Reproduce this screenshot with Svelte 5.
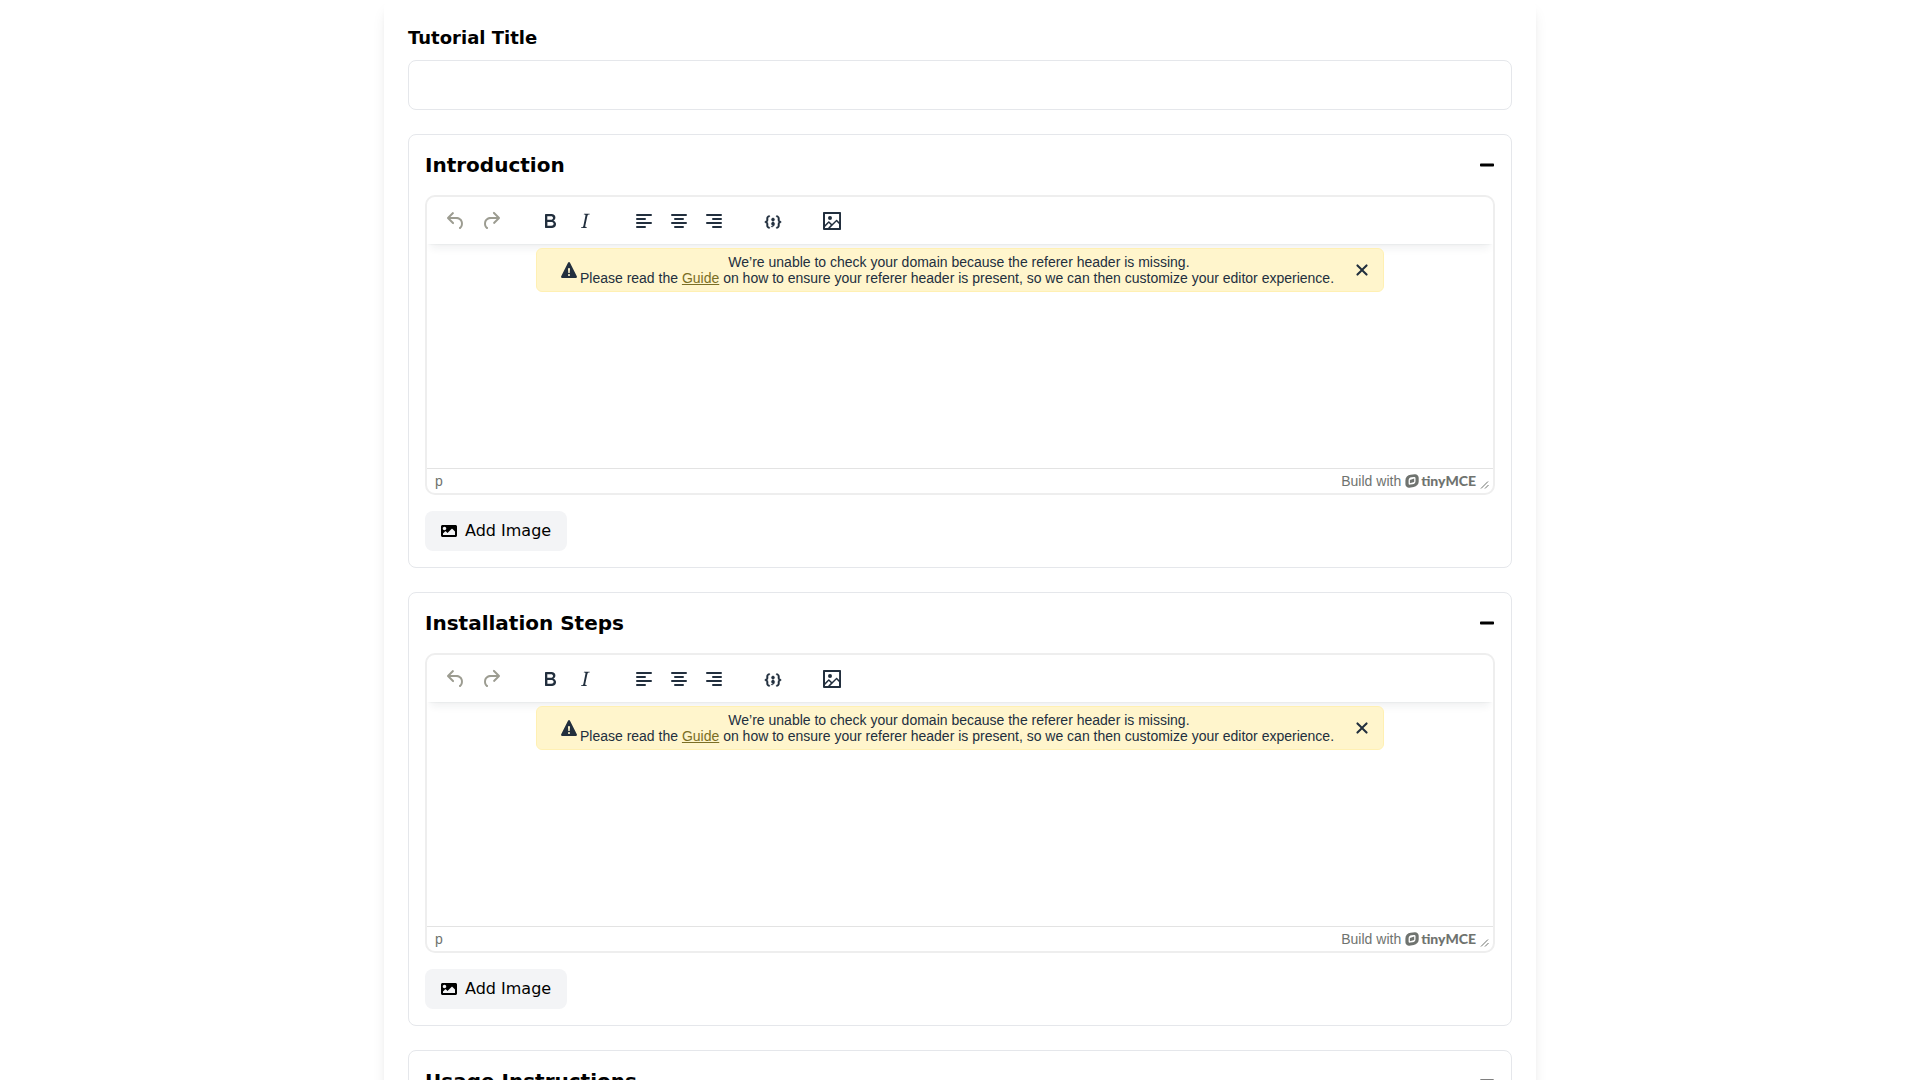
<script>
  let title = $state('');
  let sections = $state([
    { id: 'introduction', name: 'Introduction', open: true, notice: true },
    { id: 'installation', name: 'Installation Steps', open: true, notice: true },
    { id: 'usage', name: 'Usage Instructions', open: true, notice: true }
  ]);

  const groups = [
    [
      {
        label: 'Undo',
        disabled: true,
        d: 'M6.4 8H12c3.7 0 6.2 2 6.8 5.1.6 2.7-.4 5.6-2.3 6.8a1 1 0 0 1-1-1.8c1.1-.6 1.8-2.7 1.4-4.6-.5-2.1-2.1-3.5-4.9-3.5H6.4l3.3 3.3a1 1 0 1 1-1.4 1.4l-5-5a1 1 0 0 1 0-1.4l5-5a1 1 0 0 1 1.4 1.4L6.4 8Z'
      },
      {
        label: 'Redo',
        disabled: true,
        d: 'M17.6 10H12c-2.8 0-4.4 1.4-4.9 3.5-.4 2 .3 4 1.4 4.6a1 1 0 1 1-1 1.8c-2-1.2-2.9-4.1-2.3-6.8.6-3 3-5.1 6.8-5.1h5.6l-3.3-3.3a1 1 0 1 1 1.4-1.4l5 5a1 1 0 0 1 0 1.4l-5 5a1 1 0 0 1-1.4-1.4l3.3-3.3Z'
      }
    ],
    [
      {
        label: 'Bold',
        d: 'M7.8 19c-.3 0-.5 0-.6-.2l-.2-.5V5.7c0-.2 0-.4.2-.5l.6-.2h5c1.5 0 2.7.3 3.5 1 .7.6 1.1 1.4 1.1 2.5a3 3 0 0 1-.6 1.9c-.4.6-1 1-1.6 1.2.4.1.9.3 1.3.6s.8.7 1 1.2c.4.4.5 1 .5 1.6 0 1.3-.4 2.3-1.3 3-.8.7-2.1 1-3.8 1H7.8Zm5-8.3c.6 0 1.2-.1 1.6-.5.4-.3.6-.7.6-1.3 0-1.1-.8-1.7-2.3-1.7H9.3v3.5h3.4Zm.5 6c.7 0 1.3-.1 1.7-.4.4-.4.6-.9.6-1.5s-.2-1-.7-1.4c-.4-.3-1-.4-2-.4H9.4v3.8h4Z'
      },
      {
        label: 'Italic',
        d: 'm16.7 4.7-.1.9h-.3c-.6 0-1 0-1.4.3-.3.3-.4.6-.5 1.1l-2.1 9.8v.6c0 .5.4.8 1.4.8h.2l-.2.8H8l.2-.8h.2c1.1 0 1.8-.5 2-1.5l2-9.8.1-.5c0-.6-.4-.8-1.4-.8h-.3l.2-.9h5.8Z'
      }
    ],
    [
      {
        label: 'Align left',
        d: 'M5 5h14a1 1 0 0 1 0 2H5a1 1 0 1 1 0-2Zm0 4h8a1 1 0 0 1 0 2H5a1 1 0 1 1 0-2Zm0 8h8a1 1 0 0 1 0 2H5a1 1 0 0 1 0-2Zm0-4h14a1 1 0 0 1 0 2H5a1 1 0 0 1 0-2Z'
      },
      {
        label: 'Align center',
        d: 'M5 5h14a1 1 0 0 1 0 2H5a1 1 0 1 1 0-2Zm3 4h8a1 1 0 0 1 0 2H8a1 1 0 1 1 0-2Zm0 8h8a1 1 0 0 1 0 2H8a1 1 0 0 1 0-2Zm-3-4h14a1 1 0 0 1 0 2H5a1 1 0 0 1 0-2Z'
      },
      {
        label: 'Align right',
        d: 'M5 5h14a1 1 0 0 1 0 2H5a1 1 0 1 1 0-2Zm6 4h8a1 1 0 0 1 0 2h-8a1 1 0 0 1 0-2Zm0 8h8a1 1 0 0 1 0 2h-8a1 1 0 0 1 0-2Zm-6-4h14a1 1 0 0 1 0 2H5a1 1 0 0 1 0-2Z'
      }
    ],
    [
      {
        label: 'Insert code sample',
        heavy: true,
        d: 'M7.1 11a2.8 2.8 0 0 1-.8 2 2.8 2.8 0 0 1 .8 2v1.7c0 .3.1.6.4.8.2.3.5.4.8.4.3 0 .4.2.4.4v.8c0 .2-.1.4-.4.4-.7 0-1.4-.3-2-.8-.5-.6-.8-1.3-.8-2V15c0-.3-.1-.6-.4-.8-.2-.3-.5-.4-.8-.4a.4.4 0 0 1-.4-.4v-.8c0-.2.2-.4.4-.4.3 0 .6-.1.8-.4.3-.2.4-.5.4-.8V9.3c0-.7.3-1.4.8-2 .6-.5 1.3-.8 2-.8.3 0 .4.2.4.4v.8c0 .2-.1.4-.4.4-.3 0-.6.1-.8.4-.3.2-.4.5-.4.8V11Zm9.8 0V9.3c0-.3-.1-.6-.4-.8-.2-.3-.5-.4-.8-.4a.4.4 0 0 1-.4-.4V7c0-.2.1-.4.4-.4.7 0 1.4.3 2 .8.5.6.8 1.3.8 2V11c0 .3.1.6.4.8.2.3.5.4.8.4.2 0 .4.2.4.4v.8c0 .2-.2.4-.4.4-.3 0-.6.1-.8.4-.3.2-.4.5-.4.8v1.7c0 .7-.3 1.4-.8 2-.6.5-1.3.8-2 .8a.4.4 0 0 1-.4-.4v-.8c0-.2.1-.4.4-.4.3 0 .6-.1.8-.4.3-.2.4-.5.4-.8V15a2.8 2.8 0 0 1 .8-2 2.8 2.8 0 0 1-.8-2Zm-3.3-.4c0 .4-.1.8-.5 1.1-.3.3-.7.5-1.1.5-.4 0-.8-.2-1.1-.5-.4-.3-.5-.7-.5-1.1 0-.5.1-.9.5-1.2.3-.3.7-.4 1.1-.4.4 0 .8.1 1.1.4.4.3.5.7.5 1.2ZM12 13c.4 0 .8.1 1.1.5.4.3.5.7.5 1.1 0 1-.1 1.6-.5 2a3 3 0 0 1-1.1 1c-.4.3-.8.4-1.1.4a.5.5 0 0 1-.5-.5V17a3 3 0 0 0 1-.2l.6-.6c-.6 0-1-.2-1.3-.5-.2-.3-.3-.7-.3-1 0-.5.1-1 .5-1.2.3-.4.7-.5 1.1-.5Z'
      }
    ],
    [
      {
        label: 'Insert image',
        d: 'm5 15.7 3.3-3.2c.3-.3.7-.3 1 0L12 15l4.1-4c.3-.4.8-.4 1 0l2 1.9V5H5v10.7ZM5 18V19h3l2.8-2.9-2-2L5 17.9Zm14-3-2.5-2.4-6.4 6.5H19v-4ZM4 3h16c.6 0 1 .4 1 1v16c0 .6-.4 1-1 1H4a1 1 0 0 1-1-1V4c0-.6.4-1 1-1Zm6 8a2 2 0 1 0 0-4 2 2 0 0 0 0 4Z'
      }
    ]
  ];
</script>

<main class="page">
  <form class="sheet" onsubmit={(e) => e.preventDefault()}>
    <div class="field">
      <label for="title">Tutorial Title</label>
      <input id="title" type="text" bind:value={title} />
    </div>

    {#each sections as section (section.id)}
      <section class="panel">
        <header class="panel-head">
          <h2>{section.name}</h2>
          <button
            type="button"
            class="toggle"
            aria-label="Toggle {section.name}"
            aria-expanded={section.open}
            onclick={() => (section.open = !section.open)}
          >
            <svg viewBox="0 0 448 512" width="16" height="16" aria-hidden="true">
              <path d="M416 208H32c-17.67 0-32 14.33-32 32v32c0 17.67 14.33 32 32 32h384c17.67 0 32-14.33 32-32v-32c0-17.67-14.33-32-32-32z" />
            </svg>
          </button>
        </header>

        {#if section.open}
          <div class="editor">
            <div class="toolbar" role="toolbar" aria-label="{section.name} formatting">
              {#each groups as group}
                <div class="group">
                  {#each group as tool}
                    <button type="button" class="tool" class:heavy={tool.heavy} aria-label={tool.label} disabled={tool.disabled}>
                      <svg viewBox="0 0 24 24" width="24" height="24" aria-hidden="true">
                        <path fill-rule="evenodd" d={tool.d} />
                      </svg>
                    </button>
                  {/each}
                </div>
              {/each}
            </div>

            <div class="body">
              {#if section.notice}
                <div class="notice" role="alert">
                  <svg viewBox="0 0 24 24" width="24" height="24" aria-hidden="true">
                    <path fill-rule="evenodd" d="M19.8 18.3c.2.5.3.9 0 1.2-.1.3-.5.5-1 .5H5.2c-.5 0-.9-.2-1-.5-.3-.3-.2-.7 0-1.2L11 4.7l.5-.5.5-.2c.2 0 .3 0 .5.2.2 0 .3.3.5.5l6.8 13.6ZM12 18c.3 0 .5-.1.7-.3.2-.2.3-.4.3-.7a1 1 0 0 0-.3-.7 1 1 0 0 0-.7-.3 1 1 0 0 0-.7.3 1 1 0 0 0-.3.7c0 .3.1.5.3.7.2.2.4.3.7.3Zm.7-3 .3-4a1 1 0 0 0-.3-.7 1 1 0 0 0-.7-.3 1 1 0 0 0-.7.3 1 1 0 0 0-.3.7l.3 4h1.4Z" />
                  </svg>
                  <p>
                    &nbsp;We’re unable to check your domain because the referer header is missing.<br />
                    Please read the <a href="#guide">Guide</a> on how to ensure your referer header is present, so we can then customize your editor experience.
                  </p>
                  <button type="button" class="dismiss" aria-label="Close" onclick={() => (section.notice = false)}>
                    <svg viewBox="0 0 24 24" width="24" height="24" aria-hidden="true">
                      <path d="M17.3 8.2 13.4 12l3.9 3.8a1 1 0 0 1-1.5 1.5L12 13.4l-3.8 3.9a1 1 0 0 1-1.5-1.5l3.9-3.8-3.9-3.8a1 1 0 0 1 1.5-1.5l3.8 3.9 3.8-3.9a1 1 0 0 1 1.5 1.5Z" />
                    </svg>
                  </button>
                </div>
              {/if}
              <div class="content" contenteditable="true" role="textbox" tabindex="0" aria-multiline="true" aria-label={section.name}></div>
            </div>

            <footer class="status">
              <span>p</span>
              <a class="brand" href="#tinymce">
                <span>Build with</span>
                <svg viewBox="0 0 14 14" width="14" height="14" aria-hidden="true">
                  <path fill-rule="evenodd" d="M5.6.7 9.8.2a3.600 3.600 0 0 1 3.900 3.600v3.400a5.800 5.800 0 0 1-5 5.900l-4.300.6A3.600 3.600 0 0 1 .4 10.200V6.500A5.800 5.800 0 0 1 5.600.7ZM6.600 3.300A3.300 3.300 0 0 0 3.600 6.600v2.700a1.300 1.300 0 0 0 1.600 1.300l2.300-.3A3.300 3.300 0 0 0 10.500 7V4.500A1.300 1.300 0 0 0 8.900 3ZM4.900 5.900l4.300-1.300v3.300L4.900 9.200Z" />
                </svg>
                <b>tinyMCE</b>
              </a>
              <svg class="grip" viewBox="0 0 10 10" width="10" height="10" aria-hidden="true">
                <path d="M1 8.500 8 1.500M5 8.500 8.500 5" />
              </svg>
            </footer>
          </div>

          <button type="button" class="add">
            <svg viewBox="0 0 512 512" width="16" height="16" aria-hidden="true">
              <path d="M464 448H48c-26.51 0-48-21.49-48-48V112c0-26.51 21.49-48 48-48h416c26.51 0 48 21.49 48 48v288c0 26.51-21.49 48-48 48zM112 120c-30.928 0-56 25.072-56 56s25.072 56 56 56 56-25.072 56-56-25.072-56-56-56zM64 384h384V272l-87.515-87.515c-4.686-4.686-12.284-4.686-16.971 0L208 320l-55.515-55.515c-4.686-4.686-12.284-4.686-16.971 0L64 336v48z" />
            </svg>
            Add Image
          </button>
        {/if}
      </section>
    {/each}
  </form>
</main>

<style>
  :global(body) {
    margin: 0;
    background: #fff;
  }

  .page,
  .page * {
    box-sizing: border-box;
  }

  .page {
    font-family: 'DejaVu Sans', sans-serif;
    font-size: 16px;
    line-height: 24px;
    color: #000;
  }

  button {
    font: inherit;
    color: inherit;
    border: 0;
    padding: 0;
    background: none;
    cursor: pointer;
  }

  svg {
    display: block;
    flex: none;
    fill: currentColor;
  }

  .sheet {
    display: flex;
    flex-direction: column;
    gap: 24px;
    max-width: 1152px;
    margin: 0 auto;
    padding: 24px;
    background: #fff;
    border-radius: 8px;
    box-shadow:
      0 10px 15px -3px rgba(0, 0, 0, 0.1),
      0 4px 6px -4px rgba(0, 0, 0, 0.1);
  }

  .field {
    display: flex;
    flex-direction: column;
    gap: 8px;
  }

  label {
    font-size: 18px;
    line-height: 28px;
    font-weight: 700;
  }

  input {
    font: inherit;
    color: inherit;
    width: 100%;
    padding: 12px;
    border: 1px solid #e5e7eb;
    border-radius: 8px;
    background: #fff;
  }

  .panel {
    display: flex;
    flex-direction: column;
    align-items: flex-start;
    gap: 16px;
    padding: 16px;
    border: 1px solid #e5e7eb;
    border-radius: 8px;
  }

  .panel-head {
    display: flex;
    align-items: center;
    justify-content: space-between;
    width: 100%;
  }

  h2 {
    margin: 0;
    font-size: 20px;
    line-height: 28px;
    font-weight: 700;
  }

  .editor {
    width: 100%;
    border: 2px solid #eee;
    border-radius: 10px;
    overflow: hidden;
    font-family: 'Liberation Sans', sans-serif;
    font-size: 14px;
    line-height: 16px;
    color: #222f3e;
  }

  .toolbar {
    display: flex;
    flex-wrap: wrap;
    padding: 10px 0 9px;
    box-shadow:
      0 2px 2px -2px rgba(34, 47, 62, 0.1),
      0 8px 8px -4px rgba(34, 47, 62, 0.07);
  }

  .group {
    display: flex;
    gap: 1px;
    padding: 0 13px 0 12px;
  }

  .tool {
    display: flex;
    align-items: center;
    justify-content: center;
    width: 34px;
    height: 28px;
    border-radius: 3px;
  }

  .tool:disabled {
    color: #9c9c91;
    cursor: not-allowed;
  }

  .heavy path {
    stroke: currentColor;
    stroke-width: 0.4;
  }

  .body {
    display: flex;
    flex-direction: column;
    align-items: center;
    min-height: 224px;
    padding-top: 4px;
  }

  .notice {
    display: flex;
    align-items: center;
    padding: 5px 9px 5px 20px;
    border: 1px solid #fff0b3;
    border-radius: 6px;
    background: #fff5cc;
  }

  .notice p {
    margin: 0 16px 0 -1px;
    text-align: center;
  }

  .notice a {
    color: #7a6e25;
    text-decoration: underline;
  }

  .content {
    flex: 1;
    width: 100%;
    outline: none;
  }

  .status {
    display: flex;
    align-items: center;
    height: 25px;
    padding: 0 3px 0 8px;
    border-top: 1px solid #e3e3e3;
    color: #6f736f;
  }

  .brand {
    display: flex;
    align-items: center;
    gap: 4px;
    margin-left: auto;
    color: inherit;
    text-decoration: none;
  }

  .brand svg {
    margin-right: -2px;
  }

  .brand b {
    font-family: Lato, sans-serif;
    font-weight: 900;
  }

  .grip {
    align-self: flex-end;
    margin: 0 0 3px 4px;
    fill: none;
    stroke: currentColor;
  }

  .add {
    display: flex;
    align-items: center;
    gap: 8px;
    padding: 8px 16px;
    border-radius: 8px;
    background: #f3f4f6;
  }
</style>
